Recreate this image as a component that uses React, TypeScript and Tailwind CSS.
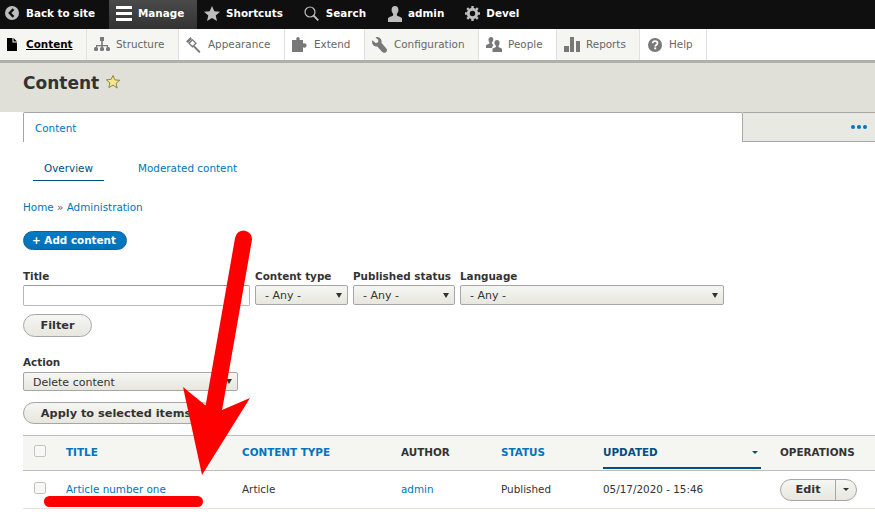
import React from 'react'

const BackIcon = () => (
  <svg width="14" height="14" viewBox="0 0 14 14">
    <circle cx="7" cy="7" r="7" fill="#bebebe" />
    <path d="M8.500 3.200 4.800 7l3.700 3.800" fill="none" stroke="#0f0f0f" strokeWidth="2.400" />
  </svg>
)
const BurgerIcon = () => (
  <svg width="16" height="15" viewBox="0 0 16 15" fill="#fff">
    <rect y="0" width="16" height="3" />
    <rect y="6" width="16" height="3" />
    <rect y="12" width="16" height="3" />
  </svg>
)
const StarIcon = () => (
  <svg width="16" height="15" viewBox="0 0 16 15" fill="#bebebe">
    <path d="M8 0l2.300 5.200 5.700.5-4.300 3.700 1.300 5.600L8 12l-5 3 1.300-5.600L0 5.700l5.700-.5z" />
  </svg>
)
const SearchIcon = () => (
  <svg width="15" height="15" viewBox="0 0 15 15" fill="none" stroke="#bebebe">
    <circle cx="6" cy="6" r="5" strokeWidth="1.200" />
    <path d="M9.500 9.500 14.300 14.300" strokeWidth="1.800" />
  </svg>
)
const PersonIcon = () => (
  <svg width="16" height="16" viewBox="0 0 16 16" fill="#bebebe">
    <path d="M8 0c2.200 0 3.400 1.700 3.400 3.900 0 1.600-.7 3-1.500 3.800v1.600c0 1 4 1.300 5.100 3.200v3.500H1v-3.500c1.100-1.900 5.100-2.200 5.100-3.200V7.700C5.300 6.900 4.600 5.500 4.600 3.900 4.600 1.700 5.800 0 8 0z" />
  </svg>
)
const GearIcon = () => (
  <svg width="15" height="15" viewBox="0 0 15 15">
    <circle cx="7.500" cy="7.500" r="4.200" fill="none" stroke="#bebebe" strokeWidth="3" />
    <g stroke="#bebebe" strokeWidth="2.400">
      <path d="M7.500 0v3M7.500 12v3M0 7.500h3M12 7.500h3M2.200 2.200l2 2M10.800 10.800l2 2M2.200 12.800l2-2M10.800 4.200l2-2" />
    </g>
  </svg>
)
const PageIcon = () => (
  <svg width="10" height="13" viewBox="0 0 10 13" fill="#000">
    <path d="M0 0h5.500v4.500H10V13H0z" />
    <path d="M6.500 0 10 3.500H6.500z" />
  </svg>
)
const StructureIcon = () => (
  <svg width="16" height="15" viewBox="0 0 16 15" fill="#787878">
    <rect x="6" y="0" width="4" height="4" />
    <rect x="7.200" y="4" width="1.600" height="6" />
    <path d="M2 8h12v2h-1.200V9.200H3.200V10H2z" />
    <rect x="0" y="10" width="4" height="4" rx="1.500" />
    <rect x="6" y="10" width="4" height="4" rx="1.500" />
    <rect x="12" y="10" width="4" height="4" rx="1.500" />
  </svg>
)
const BrushIcon = () => (
  <svg width="16" height="16" viewBox="0 0 16 16" fill="#787878">
    <path d="M4.500 0 0 4.500l2 1.500L6 2z" />
    <path d="M6.500 2.800 3 6.300l3.500 3.500L10 6.300z" fill="none" stroke="#787878" strokeWidth="1.300" />
    <path d="m8.500 8.500 6 6.300-1.400 1.200-6-6.300z" />
  </svg>
)
const PuzzleIcon = () => (
  <svg width="16" height="15" viewBox="0 0 16 15" fill="#787878">
    <path d="M0 3h4.500c-.8-2 .5-3 1.500-3s2.300 1 1.500 3H11v3.500c1.500-.8 2.500 0 3 .5.800.8.800 2.200 0 3-.5.500-1.500 1-3 .3V15H0z" />
  </svg>
)
const WrenchIcon = () => (
  <svg width="16" height="16" viewBox="0 0 16 16" fill="#787878">
    <path d="M5 0c-.7 0-1 .1-1.500.3L6.300 3l-.3 2.500-2.500.4L.5 3.300C.2 3.900 0 4.400 0 5c0 2.800 2.500 5 5.300 4.500l4.700 5.300c1.200 1.400 3.100 1.500 4.200.3 1.200-1.200 1-3-.3-4.200L9.500 6C10.200 2.800 8 0 5 0z" />
  </svg>
)
const PeopleIcon = () => (
  <svg width="16" height="15" viewBox="0 0 16 15" fill="#787878">
    <path d="M5 0c1.500 0 2.300 1.100 2.300 2.600S6.500 5 6 5.500v1L7.500 8C6.500 9 6 10 6 11H0V8.500c.5-1 3.500-1.300 3.500-2.200v-.8C3 5 2.500 4 2.500 2.600 2.500 1.100 3.500 0 5 0z" />
    <path d="M11 3c1.700 0 2.600 1.300 2.600 3 0 1.200-.5 2.200-1.100 2.800v1c0 .8 3 1 3.500 2.200V15H6.500v-3c.5-1.200 3.500-1.400 3.500-2.200v-1C9.400 8.200 8.400 7.200 8.400 6c0-1.700 .9-3 2.600-3z" />
  </svg>
)
const BarsIcon = () => (
  <svg width="16" height="15" viewBox="0 0 16 15" fill="#787878">
    <rect x="0" y="9" width="5" height="6" />
    <rect x="6" y="0" width="4" height="15" />
    <rect x="12" y="4" width="4" height="11" />
  </svg>
)
const HelpIcon = () => (
  <svg className="mr-[1px]" width="14" height="14" viewBox="0 0 14 14">
    <circle cx="7" cy="7" r="7" fill="#787878" />
    <path d="M4.600 5.300C4.700 3.900 5.700 3.200 7 3.200s2.500.8 2.500 2c0 1.800-2.300 1.700-2.300 3.200" fill="none" stroke="#fff" strokeWidth="1.700" />
    <rect x="6.200" y="9.400" width="2" height="1.900" fill="#fff" />
  </svg>
)

const toolbarItems = [
  { label: 'Shortcuts', icon: <StarIcon />, gap: 'gap-[6px]' },
  { label: 'Search', icon: <SearchIcon />, gap: 'gap-[7px]' },
  { label: 'admin', icon: <PersonIcon />, gap: 'gap-[5px]' },
  { label: 'Devel', icon: <GearIcon />, gap: 'gap-[6px]' },
]

const trayItems = [
  { label: 'Structure', icon: <StructureIcon />, shaded: true, width: 'w-[92px]', pad: 'pl-[7px]' },
  { label: 'Appearance', icon: <BrushIcon />, shaded: false, width: 'w-[106px]', pad: 'pl-[7px]' },
  { label: 'Extend', icon: <PuzzleIcon />, shaded: false, width: 'w-[80px]', pad: 'pl-[7px]' },
  { label: 'Configuration', icon: <WrenchIcon />, shaded: true, width: 'w-[114px]', pad: 'pl-[7px]' },
  { label: 'People', icon: <PeopleIcon />, shaded: false, width: 'w-[78px]', pad: 'pl-[7px]' },
  { label: 'Reports', icon: <BarsIcon />, shaded: true, width: 'w-[83px]', pad: 'pl-[7px]' },
  { label: 'Help', icon: <HelpIcon />, shaded: false, width: 'w-[67px]', pad: 'pl-[8px]' },
]

const Arrow = () => (
  <svg className="absolute left-0 top-0 pointer-events-none" width="875" height="512">
    <path d="M243.500 239 214 407" stroke="#ff0000" strokeWidth="17" strokeLinecap="round" fill="none" />
    <path d="M205 405 183 387 202 475 250 398 222 410z" fill="#ff0000" />
    <rect x="44" y="496" width="159" height="11" rx="5.500" fill="#ff0000" />
  </svg>
)

const Caret = () => (
  <span className="w-0 h-0 border-l-[3.500px] border-r-[3.500px] border-t-[5px] border-l-transparent border-r-transparent border-t-[#333]" />
)

const Select = ({ label, value, width }: { label: string; value: string; width: string }) => (
  <div className={width}>
    <div className="font-bold leading-[14px] text-[#333] mb-[2px] whitespace-nowrap">{label}</div>
    <div className="h-[20px] border border-[#a6a6a6] rounded-[2px] bg-gradient-to-b from-[#f6f6f3] to-[#e7e7df] flex items-center justify-between pl-[9px] pr-[5px] text-[11px] text-[#333]">
      <span className="pt-[2px]">{value}</span>
      <Caret />
    </div>
  </div>
)

const PillButton = ({ children, className }: { children: React.ReactNode; className: string }) => (
  <div className={`border border-[#a6a6a6] rounded-full bg-gradient-to-b from-[#f6f6f3] to-[#e7e7df] flex items-center justify-center pt-[2px] text-[11.300px] font-bold text-[#333] ${className}`}>
    {children}
  </div>
)

export default function App() {
  return (
    <div className="relative w-[875px] h-[512px] overflow-hidden bg-white text-[10.400px] text-[#333]" style={{ fontFamily: '"DejaVu Sans", sans-serif' }}>
      <div className="h-[29px] bg-[#0f0f0f] flex items-center font-bold text-white">
        <div className="flex items-center gap-[7px] pl-[5px] pb-[2px] w-[109px]">
          <BackIcon />
          <span>Back to site</span>
        </div>
        <div className="flex items-center gap-[6px] pl-[7px] pb-[2px] w-[88px] h-full bg-gradient-to-b from-[#4a4a4a] to-[#333]">
          <BurgerIcon />
          <span>Manage</span>
        </div>
        <div className="flex items-center pl-[7px] pb-[2px]">
          {toolbarItems.map(item => (
            <div key={item.label} className={`flex items-center pr-[21px] ${item.gap}`}>
              {item.icon}
              <span>{item.label}</span>
            </div>
          ))}
        </div>
      </div>

      <div className="h-[34px] bg-white flex border-b-[3px] border-[#b0b0aa]">
        <div className="w-[87px] bg-[#f5f5f2] border-r border-[#e0e0dc] flex items-center gap-[9px] pl-[7px]">
          <PageIcon />
          <span className="font-bold text-black underline">Content</span>
        </div>
        {trayItems.map(item => (
          <div key={item.label} className={`${item.width} ${item.pad} ${item.shaded ? 'bg-[#f5f5f2]' : 'bg-white'} border-r border-[#e0e0dc] flex items-center gap-[6px] text-[#666]`}>
            {item.icon}
            <span>{item.label}</span>
          </div>
        ))}
      </div>

      <div className="h-[49px] bg-[#e0e0d8] pl-[23px] pt-[8px] flex items-start gap-[6px]">
        <h1 className="text-[17px] font-bold leading-[24px] text-[#333]">Content</h1>
        <svg className="mt-[3px]" width="16" height="16" viewBox="0 0 16 16">
          <path d="M8 1.500l1.900 4.400 4.800.4-3.600 3.100 1.100 4.700L8 11.100l-4.200 2.500 1.100-4.700-3.600-3.100 4.800-.4z" fill="#f5e88a" stroke="#8c8550" strokeWidth="1" />
        </svg>
      </div>

      <div className="flex h-[30px] pl-[23px]">
        <div className="w-[720px] border border-b-0 border-[#a6a6a6] rounded-t-[2px] bg-white pl-[11px] pt-[8px] text-[#0074bd]">Content</div>
        <div className="flex-1 border-b border-t border-[#a6a6a6] bg-[#e9e9e3] flex justify-end items-center pr-[8px] gap-[2px]">
          <span className="w-[4px] h-[4px] rounded-full bg-[#0074bd]" />
          <span className="w-[4px] h-[4px] rounded-full bg-[#0074bd]" />
          <span className="w-[4px] h-[4px] rounded-full bg-[#0074bd]" />
        </div>
      </div>

      <div className="pl-[23px]">
        <div className="flex pl-[10px] mt-[11px] h-[28px]">
          <div className="w-[71px] border-b border-[#004f80] text-center leading-[31px] text-[#004f80]">Overview</div>
          <div className="pl-[34px] leading-[31px] text-[#0074bd]">Moderated content</div>
        </div>
        <div className="mt-[19px] leading-[14px]">
          <span className="text-[#0074bd]">Home</span> <span className="text-[#666]">»</span> <span className="text-[#0074bd]">Administration</span>
        </div>
        <div className="mt-[17px] w-[104px] h-[19px] pr-[2px] rounded-full bg-gradient-to-b from-[#007bc6] to-[#0071b8] border border-[#1e5c90] flex items-center justify-center text-white font-bold">
          + Add content
        </div>

        <div className="flex mt-[19px] gap-[5px]">
          <div className="w-[227px]">
            <div className="font-bold leading-[14px] mb-[2px]">Title</div>
            <div className="h-[21px] w-[227px] border border-[#b8b8b8] border-t-[#999] rounded-[2px] bg-white" />
          </div>
          <Select label="Content type" value="- Any -" width="w-[93px]" />
          <Select label="Published status" value="- Any -" width="w-[102px]" />
          <Select label="Language" value="- Any -" width="w-[264px]" />
        </div>

        <PillButton className="w-[69px] h-[23px] mt-[8px]">Filter</PillButton>

        <div className="font-bold leading-[14px] mt-[18px]">Action</div>
        <div className="w-[215px] mt-[3px] h-[19px] border border-[#a6a6a6] rounded-[2px] bg-gradient-to-b from-[#f6f6f3] to-[#e7e7df] flex items-center justify-between pl-[9px] pr-[5px] text-[11px]">
          <span className="pt-[4px]">Delete content</span>
          <Caret />
        </div>
        <PillButton className="w-[190px] h-[22px] mt-[11px] pr-[4px]">Apply to selected items</PillButton>

        <div className="mt-[11px] h-[36px] bg-[#f5f5f2] border-y border-[#bfbfba] flex items-center font-bold">
          <span className="w-[12px] h-[12px] ml-[11px] mt-[-4px] border border-[#c4c4c0] rounded-[2px] bg-[#f8f8f6]" />
          <span className="w-[176px] ml-[20px] text-[#0074bd]">TITLE</span>
          <span className="w-[159px] text-[#0074bd]">CONTENT TYPE</span>
          <span className="w-[100px]">AUTHOR</span>
          <span className="w-[102px] text-[#0074bd]">STATUS</span>
          <span className="w-[158px] h-[33px] mt-[-1px] pt-[2px] border-b-2 border-[#004f80] text-[#004f80] flex items-center justify-between pr-[3px]">
            UPDATED
            <span className="w-0 h-0 border-l-[3px] border-r-[3px] border-t-[3px] border-l-transparent border-r-transparent border-t-[#004f80]" />
          </span>
          <span className="ml-[19px]">OPERATIONS</span>
        </div>
        <div className="h-[38px] border-b border-[#e6e4df] flex items-center">
          <span className="w-[12px] h-[12px] ml-[11px] mt-[-4px] border border-[#c4c4c0] rounded-[2px] bg-[#f8f8f6]" />
          <span className="w-[176px] ml-[20px] text-[#0074bd]">Article number one</span>
          <span className="w-[159px]">Article</span>
          <span className="w-[100px] text-[#0074bd]">admin</span>
          <span className="w-[102px]">Published</span>
          <span className="w-[177px]">05/17/2020 - 15:46</span>
          <div className="w-[77px] h-[22px] border border-[#a6a6a6] rounded-full bg-gradient-to-b from-[#f6f6f3] to-[#e7e7df] flex items-center">
            <span className="w-[55px] h-full pt-[1px] border-r border-[#a6a6a6] flex items-center justify-center font-bold text-[11.300px]">Edit</span>
            <span className="flex-1 flex justify-center">
              <span className="w-0 h-0 border-l-[3px] border-r-[3px] border-t-[3px] border-l-transparent border-r-transparent border-t-[#333]" />
            </span>
          </div>
        </div>
      </div>

      <Arrow />
    </div>
  )
}
